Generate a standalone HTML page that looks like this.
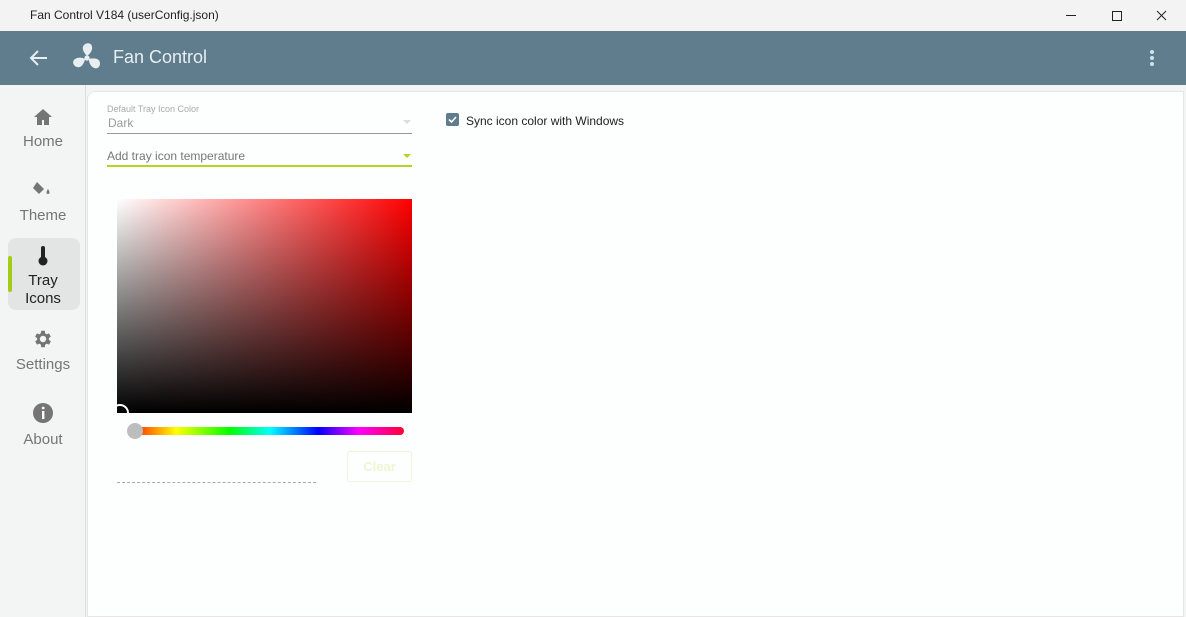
<!DOCTYPE html>
<html><head><meta charset="utf-8"><style>
*{margin:0;padding:0;box-sizing:border-box}
body{width:1186px;height:617px;overflow:hidden;background:#f3f4f4;font-family:"Liberation Sans",sans-serif;position:relative}
.tb{position:absolute;left:0;top:0;width:1186px;height:31px;background:#f3f3f3;font-size:12px;color:#222}
.hd{position:absolute;left:0;top:31px;width:1186px;height:54px;background:#5f7d8c}
.side{position:absolute;left:0;top:85px;width:86px;height:532px;background:#f3f4f4;border-right:1px solid #ddd}
.nav{position:absolute;left:0;width:86px;text-align:center;color:#757575;font-size:15px;line-height:18px}
.panel{position:absolute;left:87px;top:91px;width:1097px;height:526px;background:#fdfefe;border-top-left-radius:8px;border:1px solid #e6e6e6}
.a{position:absolute}
</style></head><body>
<div class="tb"><span class="a" style="left:30px;top:8px">Fan Control V184 (userConfig.json)</span>
<svg class="a" style="left:1058px;top:8px" width="120" height="16"><line x1="8" y1="7.5" x2="18" y2="7.5" stroke="#222"/><rect x="54.5" y="3.5" width="9" height="9" fill="none" stroke="#222"/><path d="M99 3l9 9M108 3l-9 9" stroke="#222"/></svg></div>
<div class="hd">
<svg class="a" style="left:28px;top:17px" width="22" height="20"><path d="M19 10H3M10 3L3 10l7 7" stroke="#e8eef2" stroke-width="2" fill="none"/></svg>
<svg class="a" style="left:71px;top:11px" width="32" height="32" viewBox="0 0 30 30"><g fill="#e8eef2"><circle cx="15" cy="15" r="2.5"/><path d="M15 13C11 9 9 4 14 1.5c6-2 8 5 3 10z"/><path d="M15 13C11 9 9 4 14 1.5c6-2 8 5 3 10z" transform="rotate(120 15 15)"/><path d="M15 13C11 9 9 4 14 1.5c6-2 8 5 3 10z" transform="rotate(240 15 15)"/></g></svg>
<span class="a" style="left:113px;top:16px;font-size:18px;color:#e8eef2">Fan Control</span>
<svg class="a" style="left:1148px;top:18px" width="8" height="18"><circle cx="4" cy="3" r="2" fill="#cfe3ee"/><circle cx="4" cy="9" r="2" fill="#cfe3ee"/><circle cx="4" cy="15" r="2" fill="#cfe3ee"/></svg>
</div>
<div class="side">
<div class="nav" style="top:23px"><svg width="20" height="18"><path d="M10 1L1 9h3v8h5v-5h2v5h5V9h3z" fill="#757575"/></svg><div style="margin-top:2px">Home</div></div>
<div class="nav" style="top:94px"><svg width="20" height="20"><path d="M4 3l7 7-5 5-6-6zM15 10c2 3 2 5 0 5s-2-2 0-5z" fill="#757575"/></svg><div style="margin-top:3px">Theme</div></div>
<div class="a" style="left:8px;top:153px;width:72px;height:72px;background:#e3e4e4;border-radius:8px"></div>
<div class="a" style="left:8px;top:171px;width:4px;height:36px;background:#a5cc14;border-radius:2px"></div>
<div class="nav" style="top:160px;color:#222"><svg width="12" height="22"><rect x="4" y="1" width="4" height="14" rx="2" fill="#222"/><circle cx="6" cy="16" r="4.5" fill="#222"/></svg><div>Tray<br>Icons</div></div>
<div class="nav" style="top:243px"><svg width="22" height="22" viewBox="0 0 24 24"><path fill="#757575" d="M19.4 13a7.5 7.5 0 000-2l2.1-1.6-2-3.5-2.5 1a7 7 0 00-1.7-1L15 3h-4l-.4 2.9a7 7 0 00-1.7 1l-2.5-1-2 3.5L6.6 11a7.5 7.5 0 000 2l-2.1 1.6 2 3.5 2.5-1a7 7 0 001.7 1L11 21h4l.4-2.9a7 7 0 001.7-1l2.5 1 2-3.5zM13 15.5a3.5 3.5 0 110-7 3.5 3.5 0 010 7z" transform="translate(-1 0)"/></svg><div style="margin-top:1px">Settings</div></div>
<div class="nav" style="top:317px"><svg width="22" height="22"><circle cx="11" cy="11" r="10" fill="#757575"/><rect x="10" y="9" width="2.4" height="8" fill="#fff"/><circle cx="11.2" cy="6" r="1.4" fill="#fff"/></svg><div style="margin-top:2px">About</div></div>
</div>
<div class="panel"></div>
<span class="a" style="left:107px;top:104px;font-size:9px;color:#aaa">Default Tray Icon Color</span>
<span class="a" style="left:108px;top:116px;font-size:12px;color:#999">Dark</span>
<div class="a" style="left:107px;top:133px;width:305px;height:1px;background:#999"></div>
<svg class="a" style="left:403px;top:120px" width="8" height="5"><path d="M0 0h8L4 4z" fill="#ddd"/></svg>
<span class="a" style="left:107px;top:149px;font-size:12px;color:#777">Add tray icon temperature</span>
<div class="a" style="left:107px;top:165px;width:305px;height:2px;background:#b3d423"></div>
<svg class="a" style="left:403px;top:154px" width="8" height="5"><path d="M0 0h8L4 4z" fill="#b3d423"/></svg>
<div class="a" style="left:446px;top:113px;width:13px;height:13px;background:#5f7d8c;border-radius:2px"></div>
<svg class="a" style="left:446px;top:113px" width="13" height="13"><path d="M3 6.5l2.5 2.5L10 4" stroke="#fff" stroke-width="1.6" fill="none"/></svg>
<span class="a" style="left:466px;top:114px;font-size:12px;color:#222">Sync icon color with Windows</span>
<div class="a" style="left:117px;top:199px;width:295px;height:214px;background:linear-gradient(to bottom,rgba(0,0,0,0),#000),linear-gradient(to right,#fff,#f00)"></div>
<div class="a" style="left:111px;top:404px;width:18px;height:18px;border:2px solid #fff;border-radius:50%;clip-path:inset(0 0 9px 6px)"></div>
<div class="a" style="left:136px;top:427px;width:268px;height:8px;border-radius:4px;background:linear-gradient(to right,#f30,#ff0 15%,#0f0 35%,#0ff 50%,#00f 68%,#f0f 83%,#f03)"></div>
<div class="a" style="left:127px;top:423px;width:16px;height:16px;border-radius:50%;background:#bdbdbd"></div>
<div class="a" style="left:347px;top:451px;width:65px;height:31px;border:1px solid #eef5dc;border-radius:3px;color:#eef5d0;font-size:13px;font-weight:bold;text-align:center;line-height:29px">Clear</div>
<div class="a" style="left:117px;top:482px;width:199px;border-top:1px dashed #aaa"></div>
</body></html>
